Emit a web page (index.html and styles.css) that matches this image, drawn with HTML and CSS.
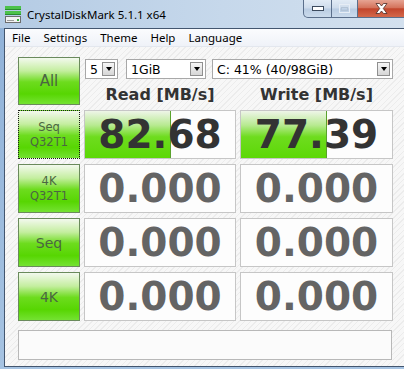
FILE: index.html
```html
<!DOCTYPE html>
<html lang="en">
<head>
  <meta charset="UTF-8">
  <title>CrystalDiskMark 5.1.1 x64</title>
  <link rel="stylesheet" href="styles.css">
</head>
<body>
  <!-- Title bar -->
  <div class="titlebar">
    <svg class="app-icon" viewBox="0 0 16 17">
      <rect x="0" y="0" width="16" height="3" fill="#4cc24a"/>
      <rect x="0" y="3" width="16" height="1" fill="#2a8a2e"/>
      <rect x="0" y="5" width="16" height="3" fill="#4cc24a"/>
      <rect x="0" y="8" width="16" height="1" fill="#2a8a2e"/>
      <rect x="0.5" y="10.5" width="15" height="6" fill="#f2f2f2" stroke="#6e6e6e"/>
      <rect x="2" y="14" width="7" height="1" fill="#9a9a9a"/>
      <rect x="12" y="13" width="2" height="2" fill="#3cb043"/>
    </svg>
    <span class="title">CrystalDiskMark 5.1.1 x64</span>
    <div class="caption">
      <div class="cap-btn min">
        <svg width="12" height="5" viewBox="0 0 12 5"><rect x="0.5" y="0.5" width="11" height="4" fill="#fff" stroke="#3d4b5e"/></svg>
      </div>
      <div class="cap-btn max">
        <svg width="11" height="9" viewBox="0 0 11 9"><rect x="0.5" y="0.5" width="10" height="8" fill="none" stroke="#e6edf5"/><rect x="2.5" y="3.5" width="6" height="3" fill="none" stroke="#b4c4d6"/></svg>
      </div>
      <div class="cap-btn close">
        <svg width="13" height="11" viewBox="0 0 13 11"><path d="M1 0.5 L4.5 0.5 L6.5 3 L8.5 0.5 L12 0.5 L8.3 5.5 L12 10.5 L8.5 10.5 L6.5 8 L4.5 10.5 L1 10.5 L4.7 5.5 Z" fill="#fff" stroke="#4a2a24" stroke-width="0.8"/></svg>
      </div>
    </div>
  </div>

  <div class="client">
    <!-- Menu -->
    <nav class="menubar">
      <span>File</span>
      <span>Settings</span>
      <span>Theme</span>
      <span>Help</span>
      <span>Language</span>
    </nav>

    <main class="panel">
      <div class="grid">
        <div class="test big">All</div>
        <div class="top">
          <div class="selects">
            <div class="combo c-count"><span>5</span><i class="arrow"></i></div>
            <div class="combo c-size"><span>1GiB</span><i class="arrow"></i></div>
            <div class="combo c-drive"><span>C: 41% (40/98GiB)</span><i class="arrow"></i></div>
          </div>
          <div class="heads">
            <div>Read [MB/s]</div>
            <div>Write [MB/s]</div>
          </div>
        </div>

        <div class="test small focus">Seq<br>Q32T1</div>
        <div class="result done"><div class="bar" style="width: 57%"></div><span>82.68</span></div>
        <div class="result done"><div class="bar" style="width: 57%"></div><span>77.39</span></div>

        <div class="test small">4K<br>Q32T1</div>
        <div class="result"><span>0.000</span></div>
        <div class="result"><span>0.000</span></div>

        <div class="test mid">Seq</div>
        <div class="result"><span>0.000</span></div>
        <div class="result"><span>0.000</span></div>

        <div class="test mid">4K</div>
        <div class="result"><span>0.000</span></div>
        <div class="result"><span>0.000</span></div>
      </div>

      <!-- Comment box -->
      <div class="status"></div>
    </main>
  </div>
</body>
</html>
```

FILE: styles.css
```css
* {
  box-sizing: border-box;
}

body {
  margin: 0;
  width: 404px;
  height: 369px;
  overflow: hidden;
  background: linear-gradient(to bottom, #8fb1d8, #a6c3e2);
  font-family: "Noto Sans", "DejaVu Sans", sans-serif;
}

/* Title bar */
.titlebar {
  height: 28px;
  display: flex;
  align-items: center;
  background: linear-gradient(to right, #b4cbe4, #c6d8eb 55%, #d3e0ee);
}

.app-icon {
  margin-left: 5px;
  width: 16px;
  height: 17px;
}

.title {
  margin-left: 6px;
  font-size: 11.5px;
  color: #000;
}

.caption {
  margin-left: auto;
  align-self: flex-start;
  display: flex;
  height: 18px;
}

.cap-btn {
  height: 18px;
  display: flex;
  align-items: center;
  justify-content: center;
  border: 1px solid #5b6f8b;
  border-top: none;
  background: linear-gradient(#e2ebf5, #cddbeb 48%, #b9cce2 52%, #cbdbec);
}

.min {
  width: 29px;
  border-radius: 0 0 0 5px;
}

.max {
  width: 26px;
  border-left: none;
}

.close {
  width: 46px;
  border-left: none;
  border-right: none;
  background: linear-gradient(#e6a493, #d4735c 45%, #c2452c 52%, #d4684a);
}

/* Client area */
.client {
  margin-left: 4px;
  height: 339px;
  border: 1px solid #43566f;
  border-right: none;
}

.menubar {
  height: 18px;
  display: flex;
  align-items: center;
  gap: 13px;
  padding-left: 7px;
  font-size: 11.5px;
  color: #000;
  background: linear-gradient(#fbfcfe, #eff2f8);
  border-bottom: 1px solid #e3e7ee;
}

.panel {
  height: 319px;
  padding: 10px 0 0 13px;
  background: repeating-linear-gradient(135deg, #f7f7f7 0 3px, #ececec 3px 4px);
}

.grid {
  display: grid;
  grid-template-columns: 62px 152px 153px;
  grid-template-rows: 48px repeat(4, 49px);
  column-gap: 4px;
  row-gap: 5px;
}

/* Test buttons */
.test {
  display: flex;
  flex-direction: column;
  justify-content: center;
  align-items: center;
  text-align: center;
  border: 1px solid #6a8a5c;
  background: linear-gradient(#f3f9ee, #c4ee9f 28%, #6ddc1e 52%, #57d602 78%, #74e232);
  color: #4a6642;
  font-family: "DejaVu Sans", sans-serif;
}

.test.big {
  font-size: 15px;
}

.test.mid {
  font-size: 14px;
}

.test.small {
  font-size: 11.5px;
  line-height: 15px;
}

.test.focus {
  border: 1px dotted #1a1a1a;
}

/* Top controls */
.top {
  grid-column: 2 / 4;
}

.selects {
  display: flex;
  height: 20px;
  margin: 2px 0 0 1px;
}

.combo {
  height: 20px;
  display: flex;
  align-items: center;
  justify-content: space-between;
  padding: 0 2px 0 4px;
  border: 1px solid #a8a8a8;
  background: #fff;
  font-family: "DejaVu Sans", sans-serif;
  font-size: 12.5px;
  color: #000;
}

.c-count {
  width: 33px;
}

.c-size {
  width: 80px;
  margin-left: 8px;
}

.c-drive {
  width: 181px;
  margin-left: 6px;
}

.arrow {
  width: 13px;
  height: 14px;
  display: flex;
  align-items: center;
  justify-content: center;
  border: 1px solid #8f8f8f;
  background: linear-gradient(#f6f6f6, #d6d6d6);
}

.arrow::after {
  content: '';
  border-top: 4px solid #000;
  border-left: 3px solid transparent;
  border-right: 3px solid transparent;
}

.heads {
  display: grid;
  grid-template-columns: 152px 153px;
  column-gap: 4px;
  margin-top: 6px;
  font: bold 16px/20px "DejaVu Sans", sans-serif;
  color: #333;
  text-align: center;
}

/* Results */
.result {
  position: relative;
  display: flex;
  align-items: center;
  justify-content: center;
  overflow: hidden;
  border: 1px solid #c6c6c6;
  background: #fdfdfd;
  font: bold 39px "DejaVu Sans", sans-serif;
  color: #646464;
}

.result.done {
  color: #333;
}

.result .bar {
  position: absolute;
  left: 0;
  top: 0;
  bottom: 0;
  border-right: 1px solid #5aa22c;
  background: linear-gradient(#eef5e8, #b8ea92 30%, #6edc1e 55%, #5cd806);
}

.result span {
  position: relative;
}

.status {
  width: 374px;
  height: 30px;
  margin-top: 9px;
  border: 1px solid #b8b8b8;
  background: #fbfbfb;
}
```
